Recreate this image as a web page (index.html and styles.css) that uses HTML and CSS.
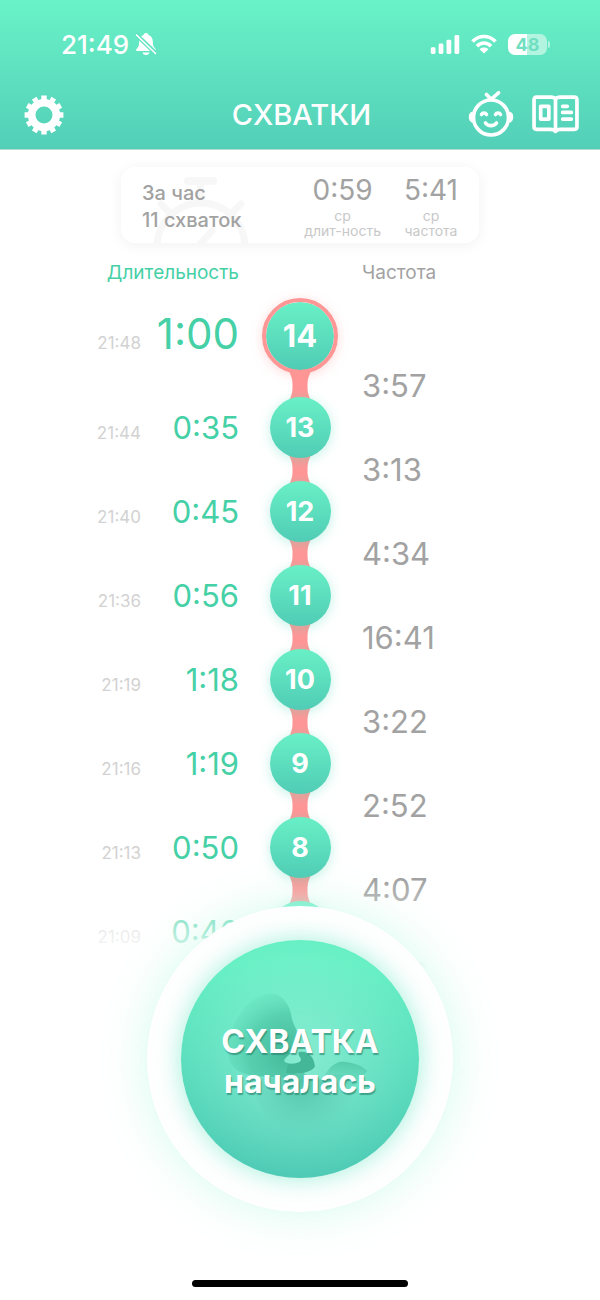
FILE: index.html
```html
<!DOCTYPE html>
<html lang="ru">
<head>
<meta charset="utf-8">
<meta name="viewport" content="width=device-width, initial-scale=1">
<title>Схватки</title>
<link rel="stylesheet" href="styles.css">
</head>
<body>
<div class="app">
  <header class="top">
    <div class="status">
      <div class="status-left">
        <span class="clock">21:49</span>
        <svg class="bell" viewBox="0 0 22 24" aria-hidden="true">
          <path fill="#fff" d="M11 1C9.500 1 8.700 1.800 8.500 3 5.500 4 4.200 6.500 4.200 9.500 4.200 13.500 3.500 15 1.500 17 .7 18 1 19 2 19H20C21 19 21.300 18 20.500 17 18.500 15 17.800 13.500 17.800 9.500 17.800 6.500 16.500 4 13.500 3 13.300 1.800 12.500 1 11 1ZM7.500 20.500H14.500C14 22.300 12.700 23 11 23S8 22.300 7.500 20.500Z"/>
          <path stroke="#5fe2c1" stroke-width="4.400" d="M0 1.500 22 22.500"/>
          <path stroke="#fff" stroke-width="1.700" stroke-linecap="round" d="M1.500 3 20.500 21.500"/>
        </svg>
      </div>
      <div class="status-right">
        <svg class="signal" viewBox="0 0 30 20" fill="#fff" aria-hidden="true">
          <rect x="0" y="13" width="5" height="7" rx="1.500"/><rect x="8.300" y="9" width="5" height="11" rx="1.500"/><rect x="16.600" y="5" width="5" height="15" rx="1.500"/><rect x="25" y="0" width="5" height="20" rx="1.500"/>
        </svg>
        <svg class="wifi" viewBox="0 0 26 20" fill="none" stroke="#fff" stroke-width="3.600" aria-hidden="true">
          <path d="M1.500 7.500C8 .8 18 .8 24.500 7.500"/><path d="M6 12.200C10 8 16 8 20 12.200"/>
          <path fill="#fff" stroke="none" d="M13 19.500 8.500 15.200C11 12.900 15 12.900 17.500 15.200Z"/>
        </svg>
        <span class="battery"><span class="battery-body">48</span><span class="battery-cap"></span></span>
      </div>
    </div>
    <nav class="bar">
      <div class="bar-side">
        <button class="icon-btn" aria-label="Настройки">
          <svg class="gear" viewBox="0 0 40 40" fill="none" stroke="#fff" aria-hidden="true">
            <circle cx="20" cy="20" r="12.300" stroke-width="7.600"/>
            <g stroke-width="5.400" stroke-linejoin="round">
              <path d="M20 5V.6M20 35V39.400M5 20H.6M35 20H39.400M12.500 7 10.300 3.200M27.500 33 29.700 36.800M27.500 7 29.700 3.200M12.500 33 10.300 36.800M7 12.500 3.200 10.300M33 27.500 36.800 29.700M7 27.500 3.200 29.700M33 12.500 36.800 10.300"/>
            </g>
          </svg>
        </button>
      </div>
      <h1 class="title">СХВАТКИ</h1>
      <div class="bar-side bar-end">
        <button class="icon-btn" aria-label="Малыш">
          <svg class="baby" viewBox="0 0 46 48" fill="none" stroke="#fff" stroke-width="3.600" stroke-linecap="round" stroke-linejoin="round" aria-hidden="true">
            <circle cx="23" cy="26.500" r="17.500"/>
            <path d="M23 8 18.500 3.500M23 8C25 7 28 4 30.500 1.800"/>
            <path fill="#fff" stroke-width="2" d="M5.500 21.500C.5 22 .5 30 5.500 31ZM40.500 21.500C45.500 22 45.500 30 40.500 31Z"/>
            <path d="M13.500 23.500C14.500 21.500 17.500 21.500 18.500 23.500M27.500 23.500C28.500 21.500 31.500 21.500 32.500 23.500M17.500 32C20 35.500 26 35.500 28.500 32"/>
          </svg>
        </button>
        <button class="icon-btn" aria-label="Статьи">
          <svg class="book" viewBox="0 0 46 38" fill="none" stroke="#fff" stroke-width="3.600" stroke-linejoin="round" aria-hidden="true">
            <path d="M23 4C22 2.500 20.500 2 18.500 2H4.500Q2 2 2 4.500V31Q2 33.500 4.500 33.500H18C20.500 33.500 22 34 23 35.500 24 34 25.500 33.500 28 33.500H41.500Q44 33.500 44 31V4.500Q44 2 41.500 2H27.500C25.500 2 24 2.500 23 4ZM23 4V34"/>
            <path d="M8.500 11H16.500V23.500H8.500Z"/><path stroke-linecap="round" d="M30 11H34.500M30 17H38.500M30 23.500H38.500"/>
          </svg>
        </button>
      </div>
    </nav>
  </header>

  <main class="content">
    <section class="summary">
      <svg class="stopwatch" viewBox="0 0 100 66" fill="none" stroke="#f7f7f7" stroke-width="7" stroke-linecap="round" aria-hidden="true">
        <path d="M37 4H62" stroke-width="8"/><path d="M49.500 4V24M10 27 20 37M90 27 80 37M50 66 61 54"/><circle cx="50" cy="70" r="44"/>
      </svg>
      <p class="hour">За час<br>11 схваток</p>
      <div class="stat"><span class="stat-value">0:59</span><span class="stat-label">ср<br>длит-ность</span></div>
      <div class="stat"><span class="stat-value">5:41</span><span class="stat-label">ср<br>частота</span></div>
    </section>

    <div class="heads"><span class="head-duration">Длительность</span><span class="head-interval">Частота</span></div>

    <svg class="defs" aria-hidden="true"><symbol id="link" viewBox="0 0 32 36"><path fill="#ff9696" d="M3 0C8 8 8.500 12 8.500 18 8.500 24 8 28 3 36H29C24 28 23.500 24 23.500 18 23.500 12 24 8 29 0Z"/></symbol></svg>

    <ol class="timeline">
      <li class="entry entry-latest"><time class="time">21:48</time><span class="duration">1:00</span><span class="ball">14</span><svg class="link" aria-hidden="true"><use href="#link"/></svg><span class="interval">3:57</span></li>
      <li class="entry"><time class="time">21:44</time><span class="duration">0:35</span><span class="ball">13</span><svg class="link" aria-hidden="true"><use href="#link"/></svg><span class="interval">3:13</span></li>
      <li class="entry"><time class="time">21:40</time><span class="duration">0:45</span><span class="ball">12</span><svg class="link" aria-hidden="true"><use href="#link"/></svg><span class="interval">4:34</span></li>
      <li class="entry"><time class="time">21:36</time><span class="duration">0:56</span><span class="ball">11</span><svg class="link" aria-hidden="true"><use href="#link"/></svg><span class="interval">16:41</span></li>
      <li class="entry"><time class="time">21:19</time><span class="duration">1:18</span><span class="ball">10</span><svg class="link" aria-hidden="true"><use href="#link"/></svg><span class="interval">3:22</span></li>
      <li class="entry"><time class="time">21:16</time><span class="duration">1:19</span><span class="ball">9</span><svg class="link" aria-hidden="true"><use href="#link"/></svg><span class="interval">2:52</span></li>
      <li class="entry"><time class="time">21:13</time><span class="duration">0:50</span><span class="ball">8</span><svg class="link" aria-hidden="true"><use href="#link"/></svg><span class="interval">4:07</span></li>
      <li class="entry"><time class="time">21:09</time><span class="duration">0:46</span><span class="ball">7</span><svg class="link" aria-hidden="true"><use href="#link"/></svg><span class="interval">3:39</span></li>
    </ol>
  </main>

  <footer class="dock">
    <div class="ring">
      <button class="start">
        <svg class="embryo" viewBox="0 0 240 240" aria-hidden="true">
          <defs>
            <radialGradient id="head" gradientUnits="userSpaceOnUse" cx="108" cy="114" r="72"><stop offset="0" stop-color="#3cb294" stop-opacity=".9"/><stop offset=".55" stop-color="#42c09e" stop-opacity=".6"/><stop offset="1" stop-color="#52d3b0" stop-opacity="0"/></radialGradient>
            <radialGradient id="body" gradientUnits="userSpaceOnUse" cx="122" cy="142" r="60"><stop offset="0" stop-color="#42b89b" stop-opacity=".75"/><stop offset=".5" stop-color="#50c3a8" stop-opacity=".4"/><stop offset="1" stop-color="#5fd0b6" stop-opacity="0"/></radialGradient>
            <linearGradient id="knee" x1=".5" y1="0" x2=".5" y2="1"><stop offset="0" stop-color="#48bf9f" stop-opacity=".7"/><stop offset="1" stop-color="#4cc9a9" stop-opacity="0"/></linearGradient>
          </defs>
          <path fill="url(#head)" d="M92 54C104 56 110 66 112 80 115 90 122 98 118 108 112 114 104 119 104 122 106 126 118 124 124 126 122 136 104 140 88 138 66 138 46 132 48 112 48 80 70 54 92 54Z"/>
          <path fill="#44b798" d="M119 113C128 111 135 119 135 128 130 134 118 136 106 134L108 125C114 125 120 124 121 121 121 118 117 116 119 113Z"/>
          <path fill="url(#body)" d="M72 138C92 142 112 134 124 134 130 142 138 142 150 138 160 132 172 138 174 150 172 176 150 200 120 198 90 194 74 168 72 138Z"/>
          <path fill="url(#knee)" d="M140 146C148 128 156 121 166 123 176 124 184 128 188 132L172 150Z"/>
        </svg>
        <span class="start-text">СХВАТКА<br>началась</span>
      </button>
    </div>
    <div class="home"></div>
  </footer>
</div>
</body>
</html>
```

FILE: styles.css
```css
* { box-sizing: border-box; }

body {
  margin: 0;
  background: #fff;
  font-family: Inter, "Liberation Sans", sans-serif;
}

button {
  padding: 0;
  border: 0;
  background: none;
  color: inherit;
  font: inherit;
  cursor: pointer;
}

.app {
  position: relative;
  display: flex;
  flex-direction: column;
  height: 100vh;
  overflow: hidden;
}

/* Header */
.top {
  flex: none;
  padding-top: 28px;
  border-bottom: 1px solid #b5dcd3;
  background: linear-gradient(#69f2c7, #53cfb8);
  color: #fff;
}

.status {
  display: flex;
  justify-content: space-between;
  align-items: center;
  height: 32px;
  padding: 0 50px 0 61px;
}

.status-left { display: flex; align-items: center; gap: 6px; }
.status-right { display: flex; align-items: center; gap: 11px; }
.clock { padding-top: 2px; font-size: 26px; font-weight: 500; line-height: 32px; }
.bell { width: 22px; height: 24px; }
.signal { width: 30px; height: 19px; }
.wifi { width: 26px; height: 20px; }
.battery { display: flex; align-items: center; gap: 1px; }

.battery-body {
  width: 39px;
  border-radius: 7px;
  background: linear-gradient(90deg, #fff 48%, #b3f4e0 48%);
  color: #70dfc1;
  font-size: 18px;
  font-weight: 700;
  line-height: 21px;
  text-align: center;
}

.battery-cap {
  width: 2px;
  height: 7px;
  border-radius: 0 2px 2px 0;
  background: #b3f4e0;
}

.bar {
  display: grid;
  grid-template-columns: 1fr auto 1fr;
  align-items: center;
  height: 89px;
  padding: 20px 21px 0 24px;
}

.bar-side { display: flex; align-items: center; gap: 18px; }
.bar-end { justify-content: flex-end; }
.icon-btn { display: flex; }
.gear { width: 40px; height: 40px; }
.baby { width: 46px; height: 48px; }
.book { width: 47px; height: 39px; }

.title {
  margin: 0;
  font-size: 29px;
  font-weight: 500;
  line-height: 36px;
}

/* Summary card */
.content {
  flex: 1;
  min-height: 0;
  overflow: hidden;
  padding-top: 17px;
}

.summary {
  position: relative;
  display: flex;
  align-items: center;
  gap: 23px;
  width: 358px;
  max-width: 100%;
  height: 76px;
  margin: 0 auto;
  padding: 0 21px;
  border-radius: 14px;
  background: #fff;
  box-shadow: 0 2px 14px rgba(0, 0, 0, 0.06);
  color: #a2a2a2;
}

.stopwatch {
  position: absolute;
  left: 30px;
  bottom: 0;
  width: 100px;
  height: 66px;
}

.hour {
  position: relative;
  flex: 1;
  margin: 0;
  padding-top: 4px;
  font-size: 20px;
  font-weight: 500;
  line-height: 27px;
}

.stat { display: flex; flex-direction: column; align-items: center; }
.stat-value { font-size: 28px; line-height: 36px; }

.stat-label {
  color: #c8c8c8;
  font-size: 14px;
  line-height: 15px;
  text-align: center;
}

/* Timeline: both sides mirror round the column of balls */
.heads,
.entry {
  display: grid;
  grid-template-columns: minmax(0, 1fr) 98px 23px 76px 24px minmax(0, 1fr) 97px;
}

.heads {
  padding-top: 18px;
  font-size: 19px;
  line-height: 24px;
}

.head-duration { grid-column: 1 / 3; color: #45d0a6; text-align: right; }
.head-interval { grid-column: 6 / -1; color: #a2a2a2; }

.defs { position: absolute; width: 0; height: 0; }

.timeline {
  margin: 0;
  padding: 13px 0 0;
  list-style: none;
}

.entry {
  grid-template-rows: 61px 23px;
  justify-items: end;
  align-items: center;
}

.time { grid-column: 1; padding-top: 10px; color: #d2d2d2; font-size: 17px; line-height: 20px; }
.duration { grid-column: 2; color: #45d0a6; font-size: 31px; line-height: 40px; }

.ball {
  z-index: 1;
  grid-column: 4;
  justify-self: center;
  width: 61px;
  border-radius: 50%;
  background: linear-gradient(#69f0c6, #50ccb5);
  box-shadow: 0 2px 12px rgba(83, 220, 184, 0.35);
  color: #fff;
  font-size: 27px;
  font-weight: 700;
  line-height: 61px;
  text-align: center;
}

.link {
  grid-column: 4;
  grid-row: 2;
  justify-self: center;
  width: 32px;
  height: 36px;
  margin: -7px 0;
}

.interval {
  grid-column: 6 / -1;
  grid-row: 2;
  justify-self: start;
  color: #a2a2a2;
  font-size: 31px;
  line-height: 23px;
}

.entry-latest { grid-template-rows: 76px 23px; }
.entry-latest .time { padding-top: 13px; }
.entry-latest .duration { padding-bottom: 4px; font-size: 42px; }

.entry-latest .ball {
  width: 76px;
  border: 4px solid #ff9696;
  background: linear-gradient(#69f0c6, #50ccb5) padding-box;
  box-shadow: 0 2px 12px rgba(255, 150, 150, 0.35);
  font-size: 31px;
  line-height: 68px;
}

/* Start button floats over the fading end of the timeline */
.dock {
  position: absolute;
  right: 0;
  bottom: 0;
  left: 0;
  z-index: 2;
  display: flex;
  flex-direction: column;
  align-items: center;
  gap: 68px;
  padding: 27px 0 13px;
  background: linear-gradient(rgba(255, 255, 255, 0), #fff 90px);
}

.ring {
  padding: 34px;
  border-radius: 50%;
  background: #fff;
  box-shadow: 0 0 48px rgba(105, 240, 198, 0.28);
}

.start {
  position: relative;
  display: flex;
  align-items: center;
  justify-content: center;
  width: 238px;
  height: 238px;
  border-radius: 50%;
  background:
    radial-gradient(circle at 50% 50%, rgba(170, 245, 225, 0.55), rgba(170, 245, 225, 0) 70%),
    linear-gradient(#68f0c5 10%, #4ecab5);
  box-shadow: 0 0 26px rgba(83, 225, 188, 0.55);
  color: #fff;
}

.embryo {
  position: absolute;
  width: 100%;
  height: 100%;
}

.start-text {
  position: relative;
  padding-top: 5px;
  font-size: 32px;
  font-weight: 700;
  line-height: 40px;
  text-shadow: 1px 2px 1px rgba(40, 130, 110, 0.65);
}

.home {
  width: 36%;
  height: 7px;
  border-radius: 4px;
  background: #000;
}
```
